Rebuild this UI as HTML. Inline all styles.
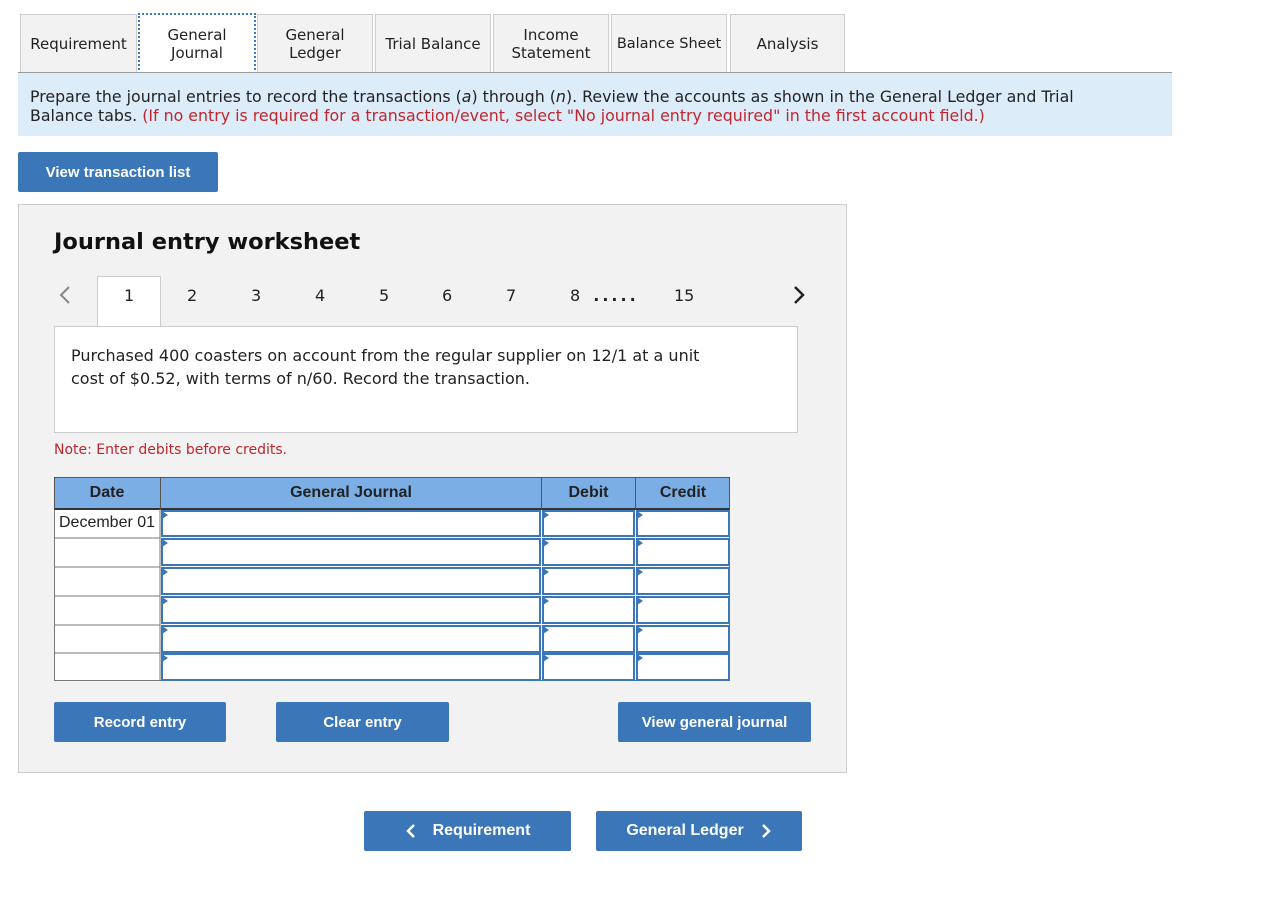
<!DOCTYPE html>
<html><head><style>
body{margin:0;background:#fff;width:1265px;height:911px;position:relative;font-family:"DejaVu Sans","Liberation Sans",sans-serif;color:#222;overflow:hidden}
.a{position:absolute}
.tab{position:absolute;top:14px;height:58px;background:#f2f2f2;border:1px solid #ccc;border-bottom:none;display:flex;align-items:center;justify-content:center;text-align:center;font-size:15px;line-height:18px;box-sizing:border-box;white-space:nowrap}
.btn{position:absolute;background:#3a76b8;color:#fff;font:bold 15px "Liberation Sans",Arial,sans-serif;display:flex;align-items:center;justify-content:center;border-radius:2px}
.pg{position:absolute;top:286px;font-size:16px}
.cell{position:absolute;box-sizing:border-box}
</style></head><body>
<div class="tab" style="left:20px;width:117px">Requirement</div>
<div class="tab" style="left:138px;width:118px;background:#fff;border:2px dotted #3a76b8;height:61px;top:13px">General<br>Journal</div>
<div class="tab" style="left:257px;width:116px">General<br>Ledger</div>
<div class="tab" style="left:375px;width:116px">Trial Balance</div>
<div class="tab" style="left:493px;width:116px">Income<br>Statement</div>
<div class="tab" style="left:611px;width:116px;font-size:14.5px">Balance Sheet</div>
<div class="tab" style="left:730px;width:115px">Analysis</div>
<div class="a" style="left:18px;top:72px;width:1154px;height:1px;background:#999"></div>
<div class="a" style="left:18px;top:73px;width:1154px;height:63px;background:#dcecf9"></div>
<div class="a" style="left:30px;top:87px;width:1100px;font-size:15.8px;line-height:19px">Prepare the journal entries to record the transactions (<i>a</i>) through (<i>n</i>). Review the accounts as shown in the General Ledger and Trial Balance tabs. <span style="color:#c0262d">(If no entry is required for a transaction/event, select "No journal entry required" in the first account field.)</span></div>
<div class="btn" style="left:18px;top:152px;width:200px;height:40px">View transaction list</div>

<div class="a" style="left:18px;top:204px;width:827px;height:567px;background:#f2f2f2;border:1px solid #ccc"></div>
<div class="a" style="left:54px;top:229px;font-size:22.5px;font-weight:bold;color:#111">Journal entry worksheet</div>
<svg class="a" style="left:56px;top:285px" width="20" height="20"><path d="M13 2L5 10l8 8" stroke="#888" stroke-width="2" fill="none"/></svg>
<svg class="a" style="left:790px;top:285px" width="20" height="20"><path d="M5 2l8 8-8 8" stroke="#222" stroke-width="2.5" fill="none"/></svg>
<div class="a" style="left:97px;top:276px;width:62px;height:51px;background:#fff;border:1px solid #ccc;border-bottom:none"></div>
<div class="pg" style="left:124px">1</div>
<div class="pg" style="left:187px">2</div>
<div class="pg" style="left:251px">3</div>
<div class="pg" style="left:315px">4</div>
<div class="pg" style="left:379px">5</div>
<div class="pg" style="left:442px">6</div>
<div class="pg" style="left:506px">7</div>
<div class="pg" style="left:570px">8 <b style="letter-spacing:3px;margin-left:8px">.....</b></div>
<div class="pg" style="left:674px">15</div>
<div class="a" style="left:54px;top:326px;width:742px;height:105px;background:#fff;border:1px solid #ccc"></div>
<div class="a" style="left:71px;top:344px;width:660px;font-size:16px;line-height:23px">Purchased 400 coasters on account from the regular supplier on 12/1 at a unit cost of $0.52, with terms of n/60. Record the transaction.</div>
<div class="a" style="left:54px;top:442px;font-size:14px;color:#c0262d">Note: Enter debits before credits.</div>

<div class="a" style="left:54px;top:477px;width:676px;height:204px;background:#fff;border:1px solid #777;box-sizing:border-box"></div>
<div class="cell" style="left:54px;top:477px;width:676px;height:33px;background:#7aaee4;border:1px solid #555;border-bottom:2px solid #333"></div>
<div class="a" style="left:54px;top:477px;width:106px;height:32px;display:flex;align-items:center;justify-content:center;font:bold 16px 'Liberation Sans',Arial,sans-serif">Date</div>
<div class="a" style="left:160px;top:477px;width:381px;height:32px;display:flex;align-items:center;justify-content:center;font:bold 16px 'Liberation Sans',Arial,sans-serif;border-left:1px solid #555;box-sizing:border-box">General Journal</div>
<div class="a" style="left:541px;top:477px;width:94px;height:32px;display:flex;align-items:center;justify-content:center;font:bold 16px 'Liberation Sans',Arial,sans-serif;border-left:1px solid #555;box-sizing:border-box">Debit</div>
<div class="a" style="left:635px;top:477px;width:95px;height:32px;display:flex;align-items:center;justify-content:center;font:bold 16px 'Liberation Sans',Arial,sans-serif;border-left:1px solid #555;box-sizing:border-box">Credit</div>
<div class="a" style="left:59px;top:514px;font:16px 'Liberation Sans',Arial,sans-serif">December 01</div>
<svg class="a" style="left:0;top:0" width="1265" height="911">
<g fill="none">
<line x1="160" y1="509" x2="160" y2="681" stroke="#777"/>
<line x1="54" y1="538" x2="160" y2="538" stroke="#777"/>
<line x1="54" y1="567" x2="160" y2="567" stroke="#777"/>
<line x1="54" y1="596" x2="160" y2="596" stroke="#777"/>
<line x1="54" y1="625" x2="160" y2="625" stroke="#777"/>
<line x1="54" y1="653" x2="160" y2="653" stroke="#777"/>
</g>
<g stroke="#3a76b8" stroke-width="2" fill="#fff">
<rect x="162" y="511" width="378" height="25"/><rect x="543" y="511" width="91" height="25"/><rect x="637" y="511" width="92" height="25"/>
<rect x="162" y="539" width="378" height="26"/><rect x="543" y="539" width="91" height="26"/><rect x="637" y="539" width="92" height="26"/>
<rect x="162" y="568" width="378" height="26"/><rect x="543" y="568" width="91" height="26"/><rect x="637" y="568" width="92" height="26"/>
<rect x="162" y="597" width="378" height="26"/><rect x="543" y="597" width="91" height="26"/><rect x="637" y="597" width="92" height="26"/>
<rect x="162" y="626" width="378" height="26"/><rect x="543" y="626" width="91" height="26"/><rect x="637" y="626" width="92" height="26"/>
<rect x="162" y="654" width="378" height="26"/><rect x="543" y="654" width="91" height="26"/><rect x="637" y="654" width="92" height="26"/>
</g>
<g fill="#3a76b8">
<path d="M162 511l6 4-6 4z"/><path d="M543 511l6 4-6 4z"/><path d="M637 511l6 4-6 4z"/>
<path d="M162 539l6 4-6 4z"/><path d="M543 539l6 4-6 4z"/><path d="M637 539l6 4-6 4z"/>
<path d="M162 568l6 4-6 4z"/><path d="M543 568l6 4-6 4z"/><path d="M637 568l6 4-6 4z"/>
<path d="M162 597l6 4-6 4z"/><path d="M543 597l6 4-6 4z"/><path d="M637 597l6 4-6 4z"/>
<path d="M162 626l6 4-6 4z"/><path d="M543 626l6 4-6 4z"/><path d="M637 626l6 4-6 4z"/>
<path d="M162 654l6 4-6 4z"/><path d="M543 654l6 4-6 4z"/><path d="M637 654l6 4-6 4z"/>
</g>
</svg>
<div class="btn" style="left:54px;top:702px;width:172px;height:40px">Record entry</div>
<div class="btn" style="left:276px;top:702px;width:173px;height:40px">Clear entry</div>
<div class="btn" style="left:618px;top:702px;width:193px;height:40px">View general journal</div>
<div class="btn" style="left:364px;top:811px;width:207px;height:40px;font-size:16px"><svg width="12" height="14" style="margin-right:16px"><path d="M9 1L3 7l6 6" stroke="#fff" stroke-width="2.5" fill="none"/></svg>Requirement</div>
<div class="btn" style="left:596px;top:811px;width:206px;height:40px;font-size:16px">General Ledger<svg width="12" height="14" style="margin-left:16px"><path d="M3 1l6 6-6 6" stroke="#fff" stroke-width="2.5" fill="none"/></svg></div>
</body></html>
